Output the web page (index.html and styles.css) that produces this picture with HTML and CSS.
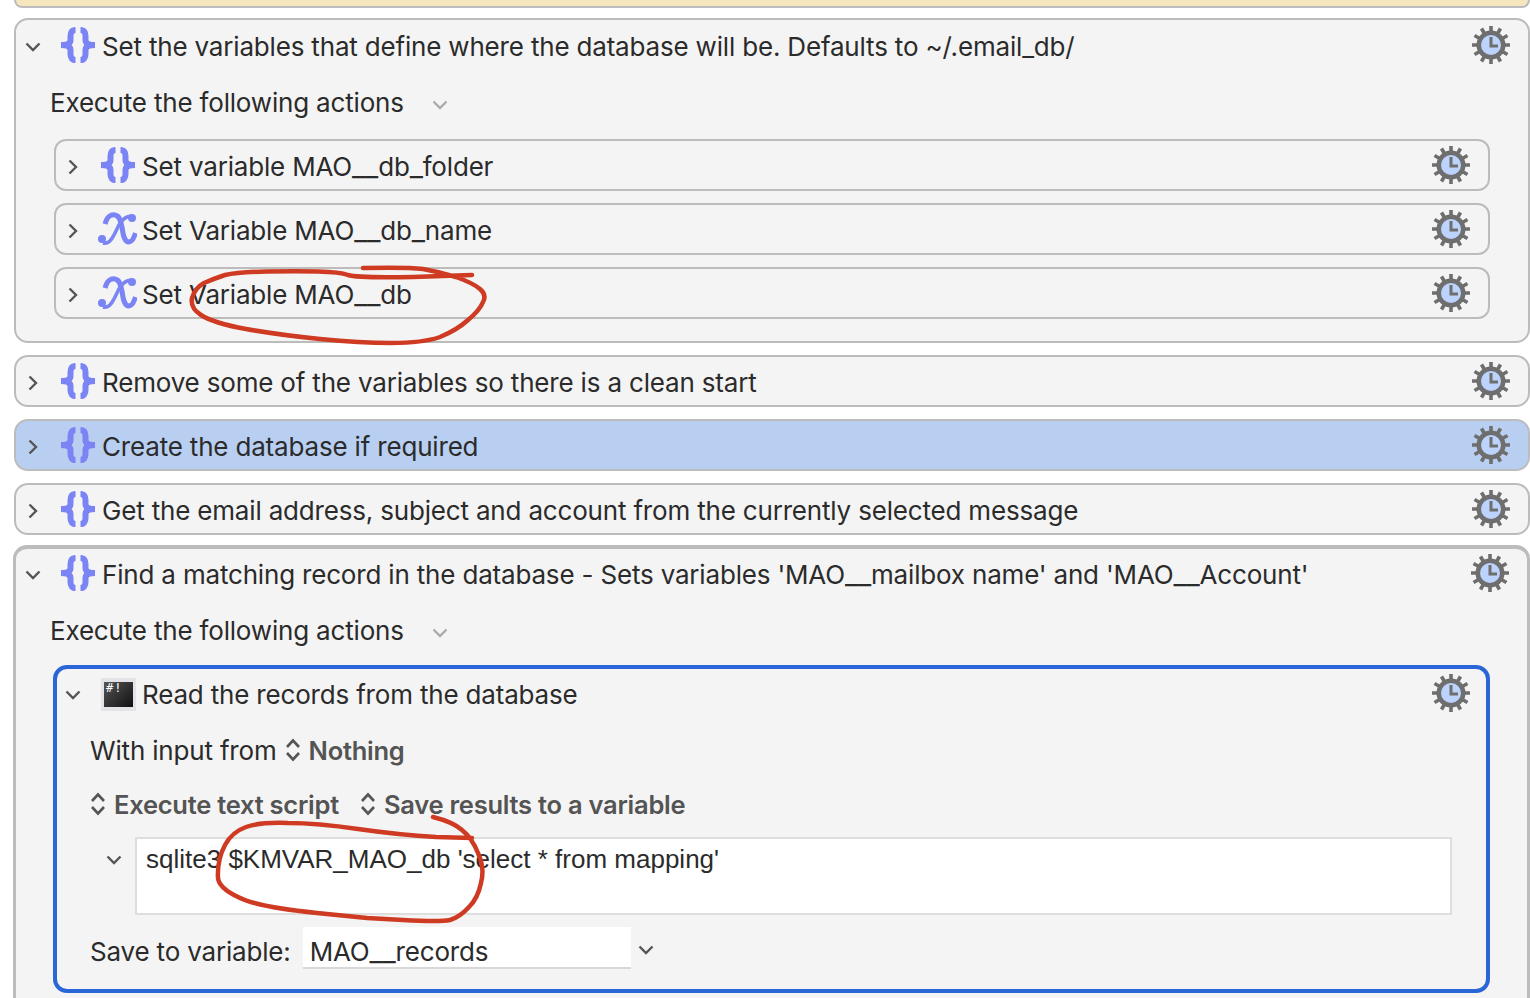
FILE: index.html
```html
<!DOCTYPE html>
<html lang="en">
<head>
<meta charset="utf-8">
<title>Macro actions</title>
<link rel="stylesheet" href="styles.css">
</head>
<body>
<svg class="defs" width="0" height="0" aria-hidden="true">
  <defs>
    <symbol id="braces" viewBox="0 0 36 36">
      <path d="M15.500 3C12 3 10.500 5.500 10.500 9V13C10.500 16 8 18 1 18C8 18 10.500 20 10.500 23V27C10.500 30.500 12 33 15.500 33" fill="none" stroke="#7a84f4" stroke-width="6"/>
      <path d="M20.500 3C24 3 25.500 5.500 25.500 9V13C25.500 16 28 18 35 18C28 18 25.500 20 25.500 23V27C25.500 30.500 24 33 20.500 33" fill="none" stroke="#7a84f4" stroke-width="6"/>
    </symbol>
    <symbol id="xvar" viewBox="0 0 40 34">
      <path d="M8 12C10 5 14 2 18 3C23 4 24 10 25 15C26 22 27 30 32 30C35 30 37 26 38.500 21" fill="none" stroke="#7a84f4" stroke-width="5"/>
      <path d="M36 5C31 3 27 6 23 11L17 23C14 29 10 32 6 31" fill="none" stroke="#7a84f4" stroke-width="3.600"/>
      <circle cx="35" cy="6" r="4" fill="#7a84f4"/>
      <circle cx="5" cy="27" r="4" fill="#7a84f4"/>
    </symbol>
    <symbol id="gear" viewBox="0 0 40 40">
      <g stroke="#6e6e6e" stroke-width="3.600">
        <path d="M20 1V39M1 20H39M10.500 3.500L29.500 36.500M3.500 10.500L36.500 29.500M29.500 3.500L10.500 36.500M36.500 10.500L3.500 29.500"/>
      </g>
      <circle cx="20" cy="20" r="14.500" fill="#6e6e6e"/>
      <circle cx="20" cy="20" r="10" fill="#bcd3fd"/>
      <path d="M20 12V21H27" fill="none" stroke="#6e6e6e" stroke-width="3"/>
    </symbol>
    <symbol id="chev-down" viewBox="0 0 16 10">
      <path d="M1.500 1.500L8 8L14.500 1.500" fill="none" stroke="#555" stroke-width="2.400"/>
    </symbol>
    <symbol id="chev-right" viewBox="0 0 10 16">
      <path d="M1.500 1.500L8 8L1.500 14.500" fill="none" stroke="#555" stroke-width="2.400"/>
    </symbol>
    <symbol id="updown" viewBox="0 0 16 24">
      <path d="M2 9L8 2.500L14 9M2 15L8 21.500L14 15" fill="none" stroke="#555" stroke-width="2.600"/>
    </symbol>
  </defs>
</svg>

<main class="page">
  <div class="top-note"></div>

  <section class="card">
    <header class="head lead">
      <span class="twist"><svg class="cd"><use href="#chev-down"/></svg></span>
      <svg class="ic-brace"><use href="#braces"/></svg>
      <span class="title">Set the variables that define where the database will be. Defaults to ~/.email_db/</span>
      <svg class="gear"><use href="#gear"/></svg>
    </header>
    <div class="exec"><span>Execute the following actions</span><svg class="cd-light"><use href="#chev-down"/></svg></div>
    <div class="list">
      <div class="row">
        <span class="twist"><svg class="cr"><use href="#chev-right"/></svg></span>
        <svg class="ic-brace"><use href="#braces"/></svg>
        <span class="title">Set variable MAO<span class="us">__</span>db<span class="us">_</span>folder</span>
        <svg class="gear"><use href="#gear"/></svg>
      </div>
      <div class="row">
        <span class="twist"><svg class="cr"><use href="#chev-right"/></svg></span>
        <svg class="ic-x"><use href="#xvar"/></svg>
        <span class="title">Set Variable MAO<span class="us">__</span>db<span class="us">_</span>name</span>
        <svg class="gear"><use href="#gear"/></svg>
      </div>
      <div class="row">
        <span class="twist"><svg class="cr"><use href="#chev-right"/></svg></span>
        <svg class="ic-x"><use href="#xvar"/></svg>
        <span class="title">Set Variable MAO<span class="us">__</span>db</span>
        <svg class="gear"><use href="#gear"/></svg>
      </div>
    </div>
  </section>

  <section class="card">
    <header class="head">
      <span class="twist"><svg class="cr"><use href="#chev-right"/></svg></span>
      <svg class="ic-brace"><use href="#braces"/></svg>
      <span class="title">Remove some of the variables so there is a clean start</span>
      <svg class="gear"><use href="#gear"/></svg>
    </header>
  </section>

  <section class="card selected">
    <header class="head">
      <span class="twist"><svg class="cr"><use href="#chev-right"/></svg></span>
      <svg class="ic-brace"><use href="#braces"/></svg>
      <span class="title">Create the database if required</span>
      <svg class="gear"><use href="#gear"/></svg>
    </header>
  </section>

  <section class="card">
    <header class="head">
      <span class="twist"><svg class="cr"><use href="#chev-right"/></svg></span>
      <svg class="ic-brace"><use href="#braces"/></svg>
      <span class="title">Get the email address, subject and account from the currently selected message</span>
      <svg class="gear"><use href="#gear"/></svg>
    </header>
  </section>

  <section class="card open">
    <header class="head lead">
      <span class="twist"><svg class="cd"><use href="#chev-down"/></svg></span>
      <svg class="ic-brace"><use href="#braces"/></svg>
      <span class="title">Find a matching record in the database - Sets variables 'MAO<span class="us">__</span>mailbox name' and 'MAO<span class="us">__</span>Account'</span>
      <svg class="gear"><use href="#gear"/></svg>
    </header>
    <div class="exec"><span>Execute the following actions</span><svg class="cd-light"><use href="#chev-down"/></svg></div>
    <div class="focus">
      <div class="focus-head">
        <span class="twist"><svg class="cd"><use href="#chev-down"/></svg></span>
        <span class="term"><span class="term-screen">#!</span></span>
        <span class="title">Read the records from the database</span>
        <svg class="gear"><use href="#gear"/></svg>
      </div>
      <div class="opt opt-input">
        <span>With input from</span>
        <svg class="ud"><use href="#updown"/></svg>
        <b>Nothing</b>
      </div>
      <div class="opt opt-mode">
        <svg class="ud"><use href="#updown"/></svg>
        <b>Execute text script</b>
        <svg class="ud second"><use href="#updown"/></svg>
        <b>Save results to a variable</b>
      </div>
      <div class="script">
        <svg class="cd script-twist"><use href="#chev-down"/></svg>
        <div class="code">sqlite3 $KMVAR_MAO_db 'select * from mapping'</div>
      </div>
      <div class="save">
        <span class="save-label">Save to variable:</span>
        <span class="field">MAO<span class="us">__</span>records</span>
        <svg class="cd save-chev"><use href="#chev-down"/></svg>
      </div>
    </div>
  </section>
</main>

<svg class="ink" viewBox="0 0 1530 998" aria-hidden="true">
  <path d="M472 275L413 277Q357 278 348 275Q340 272 318 271.500Q297 271 267 271.500Q238 272 225 275Q213 279 204 283Q195 288 192 298Q190 308 201 315Q213 323 246 329Q280 335 320 339Q360 343 391 343Q423 343 440 337Q457 330 468 320Q480 310 483 302Q487 295 480 289Q473 283 456 277Q440 272 423 269Q407 267 363 268"/>
  <path d="M433 817Q453 822 462 830Q472 838 478 853Q485 868 481 883Q478 898 469 907Q460 917 450 920Q440 922 403 920L367 918L317 913Q257 907 238 897Q219 888 218 878Q217 860 225 845Q232 832 246 827Q260 822 288 823Q317 823 358 829Q400 835 436 837L472 838"/>
</svg>
</body>
</html>
```

FILE: styles.css
```css
* { box-sizing: border-box; }

html, body {
  margin: 0;
  height: 998px;
  overflow: hidden;
  background: #fff;
}

body {
  position: relative;
  font-family: "Inter", "Liberation Sans", sans-serif;
  font-size: 26px;
  letter-spacing: -0.18px;
  color: #2b2b2b;
}

.defs { position: absolute; }

.page {
  display: flex;
  flex-direction: column;
  gap: 12px;
  padding: 0 0 0 14px;
}

.top-note {
  height: 8px;
  margin-bottom: -2px;
  background: #f5e6bd;
  border: 2px solid #bdbdbd;
  border-top: 0;
  border-radius: 0 0 12px 12px;
}

.card {
  flex: none;
  background: #f4f4f4;
  border: 2px solid #bcbcbc;
  border-radius: 14px;
}

.card.selected { background: #b9cff1; }

.card.open {
  height: 500px;
  margin: -2px 0 0 -1px;
  border-width: 4px 3px;
}

.card.open .head { margin-top: -1px; }

.head, .row, .focus-head {
  display: flex;
  align-items: center;
  height: 48px;
}

.head.lead { padding-top: 2px; }

.twist {
  flex: none;
  display: flex;
  justify-content: center;
  width: 34px;
  margin-top: 4px;
}

.title { flex: 1; padding-top: 3px; white-space: nowrap; }
.head .title { padding-top: 2px; }

.us { font-size: 29px; line-height: 0; }

.ic-brace { flex: none; width: 36px; height: 36px; margin-left: 10px; margin-right: 6px; }
.ic-x { flex: none; width: 40px; height: 34px; margin-left: 7px; margin-right: 5px; }

.gear { flex: none; width: 40px; height: 40px; margin-right: 17px; }

.cd { flex: none; width: 16px; height: 10px; }
.cr { flex: none; width: 10px; height: 16px; }
.cd-light { width: 16px; height: 10px; margin-left: 28px; margin-top: 6px; opacity: 0.45; }

.exec {
  display: flex;
  align-items: center;
  height: 44px;
  margin-top: 12px;
  padding-left: 34px;
}

.list {
  display: flex;
  flex-direction: column;
  gap: 12px;
  margin: 15px 38px 22px 38px;
}

.row {
  height: 52px;
  border: 2px solid #bcbcbc;
  border-radius: 12px;
}

.focus {
  height: 328px;
  margin: 13px 37px 0 37px;
  border: 4px solid #2a66d8;
  border-radius: 14px;
  padding-left: 33px;
}

.focus-head { margin-left: -33px; }
.focus-head .twist { width: 32px; }
.focus-head .gear { margin-right: 15px; }

.term {
  flex: none;
  display: flex;
  width: 35px;
  height: 33px;
  padding: 4px 3px;
  margin: 2px 6px 0 12px;
  background: #e4e4e8;
}

.term-screen {
  flex: 1;
  padding: 1px 0 0 2px;
  font: 12px/11px "DejaVu Sans Mono", monospace;
  letter-spacing: 1px;
  color: #fff;
  background: linear-gradient(135deg, #555, #111);
}

.opt {
  display: flex;
  align-items: center;
}

.opt b {
  font-size: 25.500px;
  font-weight: 600;
  letter-spacing: -0.250px;
  color: #545454;
}

.opt-input { height: 40px; margin-top: 13px; }
.opt-input .ud { margin: 0 8px 0 8px; }
.opt-mode { height: 40px; margin-top: 14px; }
.opt-mode .ud { margin-right: 8px; }
.opt-mode .second { margin-left: 21px; }

.ud { flex: none; width: 16px; height: 24px; }

.script {
  display: flex;
  align-items: flex-start;
  margin-top: 13px;
  margin-left: 16px;
}

.script-twist { margin-top: 18px; margin-right: 13px; }

.code {
  flex: none;
  width: 1317px;
  height: 78px;
  padding: 5px 9px;
  font-family: "Liberation Sans", sans-serif;
  letter-spacing: 0;
  background: #fff;
  border: 2px solid #dedede;
}

.save {
  display: flex;
  align-items: center;
  margin-top: 12px;
}

.save-label { padding-top: 6px; }
.save-chev { margin-top: 4px; }

.field {
  flex: none;
  width: 328px;
  height: 42px;
  margin: 0 7px 0 12px;
  padding: 9px 7px 0;
  background: #fff;
  border-bottom: 2px solid #d8d8d8;
}

.ink {
  position: absolute;
  inset: 0;
  width: 1530px;
  height: 998px;
  pointer-events: none;
  fill: none;
  stroke: #cf3a22;
  stroke-width: 4.500;
  stroke-linecap: round;
  stroke-linejoin: round;
}
```
